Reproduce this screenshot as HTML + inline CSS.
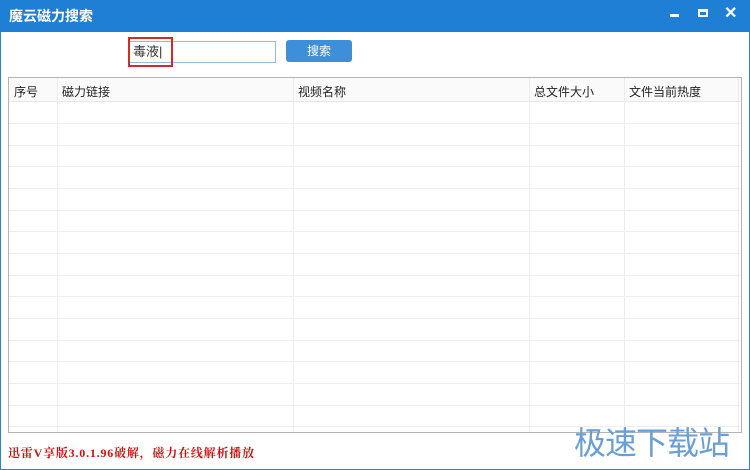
<!DOCTYPE html>
<html><head><meta charset="utf-8"><style>
*{margin:0;padding:0;box-sizing:border-box}
body{width:750px;height:470px;overflow:hidden;background:#fff;font-family:"Liberation Sans","Noto Sans CJK SC",sans-serif;position:relative}
.win{position:absolute;left:0;top:0;width:750px;height:470px;border:1px solid #2a84d4;border-top:none}
.title{position:absolute;left:0;top:0;width:750px;height:32px;background:#1f7fd5;color:#fff;font-size:14px;font-weight:bold;line-height:32px;padding-left:9px}
.ctl{position:absolute;top:0;color:#fff;font-weight:bold}
.inp{position:absolute;left:129px;top:41px;width:147px;height:22px;border:1px solid #9bb7d2;font-size:13px;line-height:20px;padding-left:3px;color:#333}
.red{position:absolute;left:128px;top:37px;width:45px;height:30px;border:2px solid #d22b2b}
.btn{position:absolute;left:286px;top:40px;width:66px;height:22px;background:#3d8fd9;border-radius:3px;color:#fff;font-size:12px;text-align:center;line-height:22px}
.tbl{position:absolute;left:8px;top:77px;width:734px;height:356px;border:1px solid #b4b4b4;overflow:hidden}
.hdr{position:absolute;left:0;top:0;width:100%;height:24px;background:#fafafa;border-bottom:1px solid #e6e6e6;font-size:12px;color:#222}
.hdr span{position:absolute;top:5px}
.vl{position:absolute;top:0;width:1px;height:100%;background:#ececec}
.hl{position:absolute;left:0;width:100%;height:1px;background:#efefef}
.foot{position:absolute;left:8px;top:444px;color:#d01010;font-size:12px;font-weight:bold;letter-spacing:0.8px;font-family:"Liberation Serif","Noto Serif CJK SC",serif}
.wm{position:absolute;left:574px;top:418px;color:#6a9fd4;font-size:32px;font-weight:normal;letter-spacing:-1px;font-family:"Liberation Sans","Noto Sans CJK SC",sans-serif}
</style></head><body>
<div class="win"></div>
<div class="title">魔云磁力搜索</div>
<div class="ctl" style="left:670px;top:14px;width:9px;height:3px;background:#fff"></div>
<div class="ctl" style="left:698px;top:9px;width:10px;height:8px;border:2px solid #fff;border-top-width:3px"></div>
<div class="ctl" style="left:724px;top:3px;font-size:16px">✕</div>
<div class="inp">毒液|</div>
<div class="red"></div>
<div class="btn">搜索</div>
<div class="tbl">
<div class="hdr"><span style="left:5px">序号</span><span style="left:53px">磁力链接</span><span style="left:289px">视频名称</span><span style="left:525px">总文件大小</span><span style="left:620px">文件当前热度</span></div>
<div class="vl" style="left:48px"></div><div class="vl" style="left:284px"></div><div class="vl" style="left:520px"></div><div class="vl" style="left:615px"></div><div class="vl" style="left:729px"></div>
<div class="hl" style="top:45px"></div><div class="hl" style="top:67px"></div><div class="hl" style="top:88px"></div><div class="hl" style="top:110px"></div><div class="hl" style="top:132px"></div><div class="hl" style="top:153px"></div><div class="hl" style="top:175px"></div><div class="hl" style="top:197px"></div><div class="hl" style="top:218px"></div><div class="hl" style="top:240px"></div><div class="hl" style="top:262px"></div><div class="hl" style="top:283px"></div><div class="hl" style="top:305px"></div><div class="hl" style="top:327px"></div><div class="hl" style="top:348px"></div>
</div>
<div class="foot">迅雷V享版3.0.1.96破解，磁力在线解析播放</div>
<div class="wm">极速下载站</div>
</body></html>
